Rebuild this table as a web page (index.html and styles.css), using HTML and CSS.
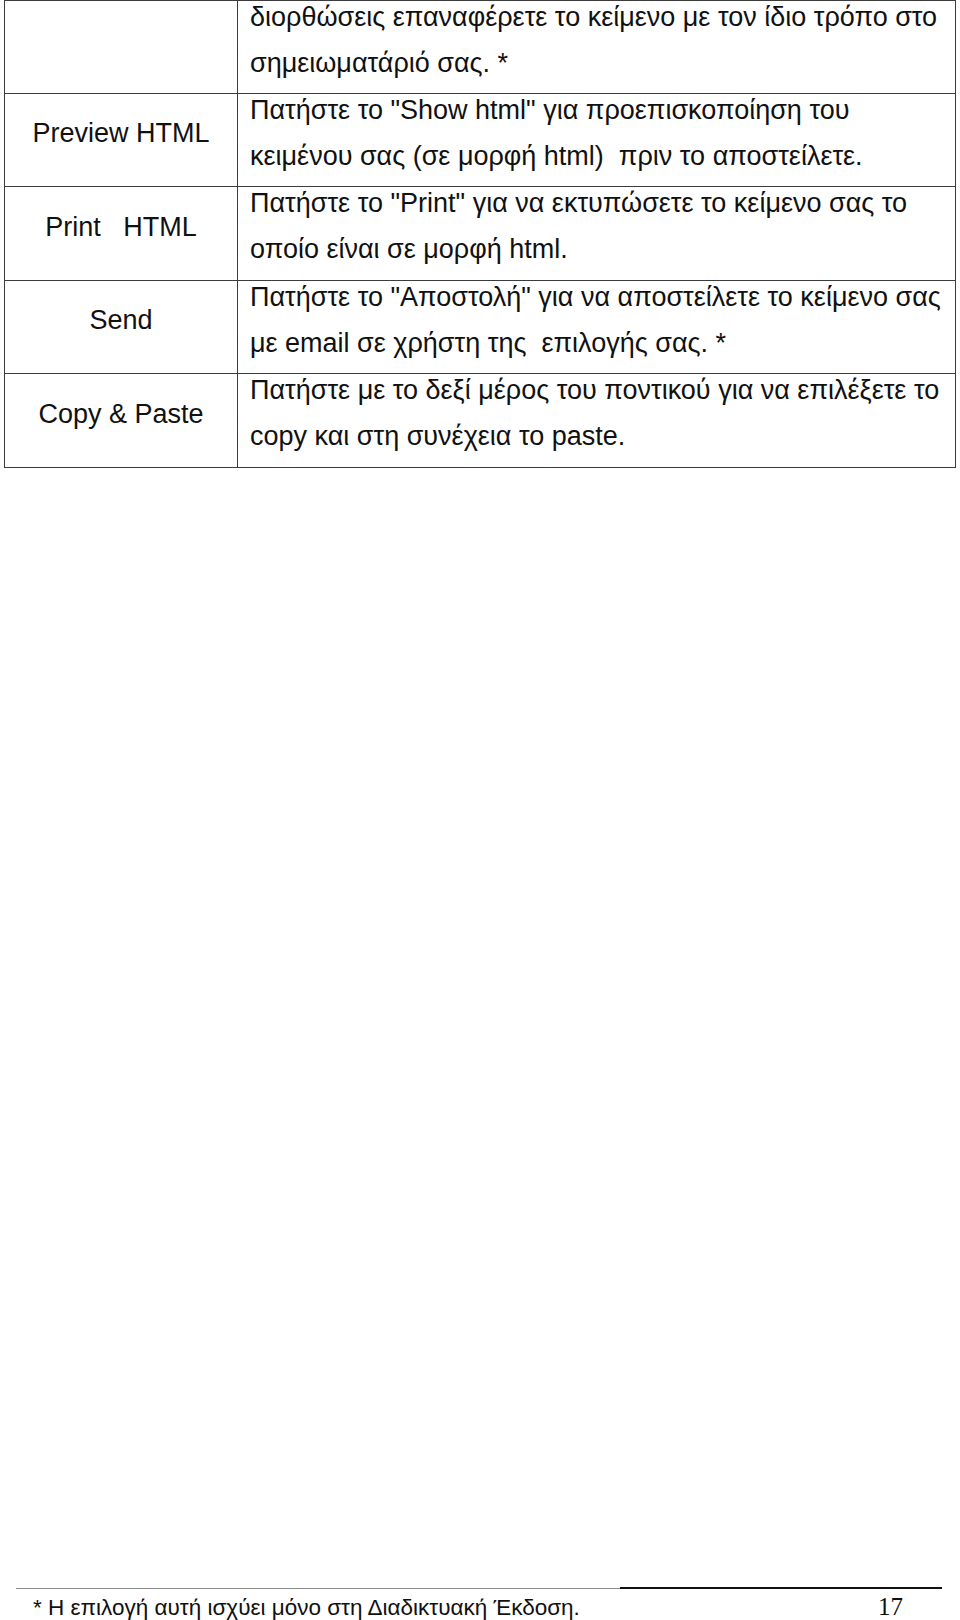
FILE: index.html
```html
<!DOCTYPE html>
<html lang="el">
<head>
<meta charset="utf-8">
<title>Οδηγίες</title>
<link rel="stylesheet" href="styles.css">
</head>
<body>
<div class="page">
  <div class="grid">
    <div class="label"></div>
    <div class="desc"><span class="ln">διορθώσεις επαναφέρετε το κείμενο με τον ίδιο τρόπο στο</span><span class="ln">σημειωματάριό σας. *</span></div>

    <div class="label"><span class="lt">Preview HTML</span></div>
    <div class="desc"><span class="ln">Πατήστε το "Show html" για προεπισκοποίηση του</span><span class="ln">κειμένου σας (σε μορφή html)  πριν το αποστείλετε.</span></div>

    <div class="label"><span class="lt">Print   HTML</span></div>
    <div class="desc"><span class="ln">Πατήστε το "Print" για να εκτυπώσετε το κείμενο σας το</span><span class="ln">οποίο είναι σε μορφή html.</span></div>

    <div class="label"><span class="lt">Send</span></div>
    <div class="desc"><span class="ln">Πατήστε το "Αποστολή" για να αποστείλετε το κείμενο σας</span><span class="ln">με email σε χρήστη της  επιλογής σας. *</span></div>

    <div class="label"><span class="lt">Copy &amp; Paste</span></div>
    <div class="desc"><span class="ln">Πατήστε με το δεξί μέρος του ποντικού για να επιλέξετε το</span><span class="ln">copy και στη συνέχεια το paste.</span></div>
  </div>

  <footer class="foot">
    <div class="rules">
      <span class="rule-note"></span>
      <span class="rule-page"></span>
    </div>
    <div class="foot-row">
      <span class="note">* Η επιλογή αυτή ισχύει μόνο στη Διαδικτυακή Έκδοση.</span>
      <span class="pnum">17</span>
    </div>
  </footer>
</div>
</body>
</html>
```

FILE: styles.css
```css
html, body {
  margin: 0;
  padding: 0;
  background: #fff;
}

.page {
  width: 960px;
  height: 1620px;
  overflow: hidden;
  display: flex;
  flex-direction: column;
  font-family: "Liberation Sans", Arial, sans-serif;
  color: #111;
}

.grid {
  margin-left: 4px;
  width: 952px;
  box-sizing: border-box;
  display: grid;
  grid-template-columns: 233px 718px;
  grid-template-rows: 93px 93px 94px 93px 94px;
  border-top: 1px solid #3c3c3c;
  border-left: 1px solid #3c3c3c;
}

.label,
.desc {
  box-sizing: border-box;
  border-right: 1px solid #3c3c3c;
  border-bottom: 1px solid #3c3c3c;
  font-size: 27px;
  line-height: 46px;
  white-space: pre;
  overflow: hidden;
}

.label {
  display: flex;
  align-items: center;
  justify-content: center;
}

.lt {
  margin-top: -14px;
}

.desc {
  padding-left: 12px;
  display: flex;
  flex-direction: column;
}

.ln {
  display: block;
}

.ln:first-child {
  margin-top: -7px;
}

.foot {
  margin-top: auto;
}

.rules {
  display: flex;
  align-items: flex-end;
  height: 2px;
  margin-left: 16px;
  width: 926px;
}

.rule-note {
  width: 604px;
  border-top: 1px solid #8a8a8a;
}

.rule-page {
  flex: 1;
  border-top: 2px solid #111;
}

.foot-row {
  display: flex;
  align-items: baseline;
  height: 29px;
  padding-top: 2px;
  padding-left: 33px;
}

.note {
  font-size: 22.5px;
  line-height: 31px;
}

.pnum {
  margin-left: auto;
  margin-right: 57px;
  font-family: "Liberation Serif", "Times New Roman", serif;
  font-size: 25px;
  line-height: 31px;
}
```
